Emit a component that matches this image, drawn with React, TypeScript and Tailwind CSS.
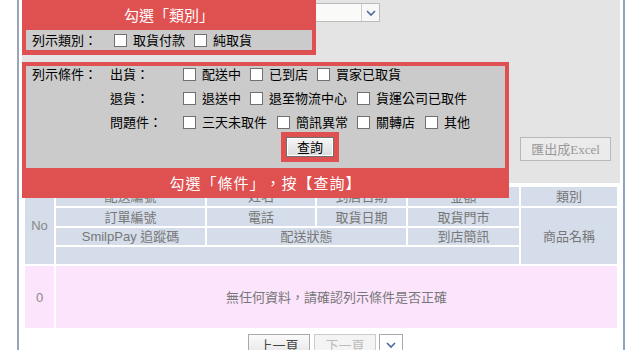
const RED = "bg-[#df5151]";

function Box() {
  return (
    <input
      type="checkbox"
      className="m-0 h-[13px] w-[13px] shrink-0 appearance-none border border-[#707070] bg-white"
    />
  );
}

function Opt({ label, w }: { label: string; w?: string }) {
  return (
    <label className={`flex items-center ${w ?? ""}`}>
      <Box />
      <span className="ml-[6px] whitespace-nowrap">{label}</span>
    </label>
  );
}

function Chevron() {
  return (
    <svg width="12" height="8" viewBox="0 0 12 8">
      <path d="M2 2 L6 6 L10 2" fill="none" stroke="#4d6b99" strokeWidth="1.6" />
    </svg>
  );
}

function Cell({ children, className = "" }: { children?: React.ReactNode; className?: string }) {
  return (
    <div className={`flex items-center justify-center bg-[#d4dde9] text-[#777] ${className}`}>
      {children}
    </div>
  );
}

export default function App() {
  return (
    <div className="h-[350px] w-[640px] overflow-hidden bg-white font-['Liberation_Sans','Noto_Sans_CJK_TC',sans-serif] text-[13px] leading-[15px] text-black [text-spacing-trim:space-all]">
      <div className="ml-[17px] h-full w-[608px] border-l-2 border-r-2 border-l-[#9aa4b6] border-r-[#8ea2c4]">
        {/* search panel */}
        <div className="relative mx-[3px] flex h-[183px] flex-col bg-[#e4e4e4] pt-[3px]">
          <div className="ml-[208px] flex h-[19px] w-[150px] border border-[#bbb] bg-[#fafaf8]">
            <div className="flex-1" />
            <div className="flex w-[18px] items-center justify-center border-l border-[#ccc] bg-[#f8f8f8]">
              <Chevron />
            </div>
          </div>
          <button className="mr-[9px] mt-[115px] flex h-[24px] w-[91px] items-center justify-center self-end border border-[#b8b8b8] bg-[#ebebeb] font-['Liberation_Serif','Noto_Sans_CJK_TC',serif] text-[#999]">
            匯出成Excel
          </button>
          <div className="ml-[218px] mt-[5px] text-[#ff0000]">查詢期間僅限最近三個月內</div>

          {/* annotation: category */}
          <div className={`absolute left-0 top-0 z-10 flex h-[55px] w-[294px] flex-col ${RED}`}>
            <div className="flex h-[30px] items-center justify-center text-[15px] text-white">勾選「類別」</div>
            <div className="mx-[4px] flex h-[20px] items-center bg-[#cbcbcb]">
              <span className="w-[88px] pl-[6px]">列示類別：</span>
              <Opt label="取貨付款" w="w-[80px]" />
              <Opt label="純取貨" />
            </div>
          </div>

          {/* annotation: conditions */}
          <div className={`absolute left-0 top-[62px] z-10 flex h-[136px] w-[487px] flex-col ${RED}`}>
            <div className="mx-[4px] mt-[4px] flex h-[102px] flex-col gap-[8px] bg-[#cbcbcb]">
              <div className="flex h-[16px] items-center">
                <span className="w-[84px] pl-[6px]">列示條件：</span>
                <span className="w-[73px]">出貨：</span>
                <Opt label="配送中" w="w-[67px]" />
                <Opt label="已到店" w="w-[67px]" />
                <Opt label="買家已取貨" />
              </div>
              <div className="flex h-[16px] items-center">
                <span className="w-[84px]" />
                <span className="w-[73px]">退貨：</span>
                <Opt label="退送中" w="w-[67px]" />
                <Opt label="退至物流中心" w="w-[107px]" />
                <Opt label="貨運公司已取件" />
              </div>
              <div className="flex h-[16px] items-center">
                <span className="w-[84px]" />
                <span className="w-[73px]">問題件：</span>
                <Opt label="三天未取件" w="w-[94px]" />
                <Opt label="簡訊異常" w="w-[80px]" />
                <Opt label="關轉店" w="w-[68px]" />
                <Opt label="其他" />
              </div>
              <div className={`-mt-[6px] ml-[255px] w-fit p-[5px] ${RED}`}>
                <button className="flex h-[20px] w-[48px] items-center justify-center border border-[#707070] bg-linear-to-b from-[#f6f6f6] to-[#dcdcdc] shadow-[inset_0_0_0_1px_#fff]">
                  查詢
                </button>
              </div>
            </div>
            <div className="flex flex-1 items-center justify-center text-[15px] tracking-[1px] text-white">
              勾選「條件」，按【查詢】
            </div>
          </div>
        </div>

        {/* result table */}
        <div className="ml-[6px] mt-[4px] grid w-[592px] grid-cols-[29px_149px_108px_89px_111px_96px] grid-rows-[19px_18px_17px_17px_62px] gap-[2px]">
          <Cell className="row-span-4 text-[#888]">No</Cell>
          <Cell>配送編號</Cell>
          <Cell>姓名</Cell>
          <Cell>到店日期</Cell>
          <Cell>金額</Cell>
          <Cell>類別</Cell>
          <Cell>訂單編號</Cell>
          <Cell>電話</Cell>
          <Cell>取貨日期</Cell>
          <Cell>取貨門市</Cell>
          <Cell className="row-span-3">商品名稱</Cell>
          <Cell>SmilpPay 追蹤碼</Cell>
          <Cell className="col-span-2">配送狀態</Cell>
          <Cell>到店簡訊</Cell>
          <Cell className="col-span-4" />
          <div className="flex items-center justify-center bg-[#fce4fc] text-[#888]">0</div>
          <div className="col-span-5 flex items-center justify-center bg-[#fce4fc] text-[#777]">
            無任何資料，請確認列示條件是否正確
          </div>
        </div>

        {/* pager */}
        <div className="mt-[6px] flex gap-[4px] pl-[229px]">
          <button className="h-[22px] w-[62px] border border-[#aaa] bg-linear-to-b from-[#fafafa] to-[#e6e6e6] text-[#444]">上一頁</button>
          <button className="h-[22px] w-[62px] border border-[#ccc] bg-[#f4f4f4] text-[#bbb]">下一頁</button>
          <div className="-ml-[1px] flex h-[22px] w-[24px] items-center justify-center border border-[#aaa] bg-white">
            <Chevron />
          </div>
        </div>
      </div>
    </div>
  );
}
